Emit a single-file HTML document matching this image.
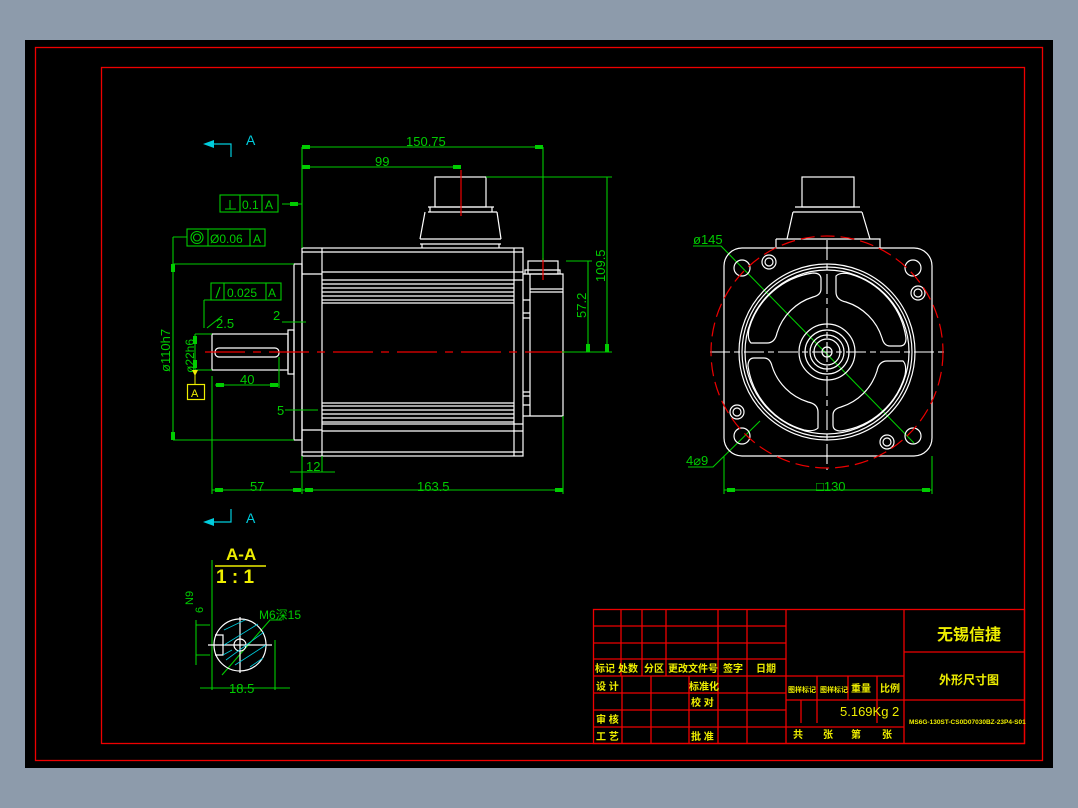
<!DOCTYPE html>
<html><head><meta charset="utf-8"><style>
html,body{margin:0;padding:0;background:#8d9bab;width:1078px;height:808px;overflow:hidden}
svg{display:block}
text{font-family:"Liberation Sans","Noto Sans CJK SC",sans-serif}
</style></head><body>
<svg width="1078" height="808" viewBox="0 0 1078 808" xmlns="http://www.w3.org/2000/svg">
<rect x="25" y="40" width="1028" height="728" fill="#000"/>
<g fill="none" stroke="#e00" stroke-width="1.3">
<rect x="35.5" y="47.5" width="1007" height="713"/>
<rect x="101.5" y="67.5" width="923" height="676"/>
</g>

<g fill="none" stroke="#fff" stroke-width="1.2">
 <rect x="435" y="177" width="51" height="30"/>
 <path d="M428 207 H494 M428 212 H497 M425 212 L420 239 M497 212 L501 239 M420 239 H501 M420 244 H501 M422 244 V248 M499 244 V248 M430 207 V212 M492 207 V212"/>
 <rect x="302" y="248" width="221" height="208"/>
 <path d="M322 248 V456 M514 248 V456 M302 274 H322 M302 430 H322 M322 272 H523 M322 284 H514 M322 288 H514 M322 292 H514 M322 296 H514 M322 300 H514 M322 303 H514 M322 403 H514 M322 406 H514 M322 410 H514 M322 414 H514 M322 418 H514 M322 422 H514 M322 431 H523 M302 252 H523 M302 452 H523 M322 280 H523 M322 424 H523"/>
 <path d="M523 274 H563 V416 H523 M530 274 V416 M530 289 H563 M530 292 H563 M523 300 H530 M523 313 H530 M523 318 H530 M523 392 H530 M523 396 H530 M523 405 H530"/>
 <rect x="528" y="261" width="30" height="13"/>
 <path d="M525 274 V270 H560 V274"/>
 <rect x="294" y="264" width="8" height="176"/>
 <rect x="288" y="330" width="6" height="44"/>
 <rect x="212" y="334" width="76" height="36"/>
 <rect x="215" y="348" width="64" height="9" rx="4"/>
</g>
<path d="M205 352 H570" stroke="#e00" stroke-width="1.3" stroke-dasharray="40 8 8 8"/>
<path d="M461 170 V216 M543 258 V280" stroke="#e00" stroke-width="1.2"/>

<g stroke="#0c0" stroke-width="1.1" fill="none">
 <path d="M302 147 H543 M543 147 V260 M302 167 H461 M302 147 V248"/>
 <path d="M486 177 H612 M607 177 V352 M566 261 H592 M588 261 V352 M562 352 H612"/>
 <path d="M173 264 H294 M173 440 H294 M173 264 V440 M173 237 V264 M173 237 H187"/>
 <path d="M212 376 V494 M302 456 V494 M563 416 V494 M212 490 H563"/>
 <path d="M290 472 H335 M322 456 V472"/>
 <path d="M215 385 H279 M279 357 V388"/>
 <path d="M195 334 H212 M195 370 H212 M195 334 V370"/>
 <path d="M204 300 V328 M204 300 H213 M207 328 L222 316"/>
 <path d="M282 322 H306 M285 410 H318"/>
 <path d="M282 204 H302"/>
 <path d="M212 560 V690 M275 640 V690 M200 688 H290 M196 620 V665 M196 625 H210 M196 655 H210 M222 675 L270 620 H282"/>
 <path d="M724 456 V494 M932 456 V494 M724 490 H932"/>
 <path d="M693 246 H721 L914 443 M688 467 H713 L760 421"/>
</g>
<g fill="#0c0">
 <rect x="302" y="145" width="8" height="4"/><rect x="535" y="145" width="8" height="4"/>
 <rect x="302" y="165" width="8" height="4"/><rect x="453" y="165" width="8" height="4"/>
 <rect x="605" y="344" width="4" height="8"/><rect x="586" y="344" width="4" height="8"/>
 <rect x="171" y="264" width="4" height="8"/><rect x="171" y="432" width="4" height="8"/>
 <rect x="215" y="488" width="8" height="4"/><rect x="293" y="488" width="8" height="4"/>
 <rect x="305" y="488" width="8" height="4"/><rect x="555" y="488" width="8" height="4"/>
 <rect x="216" y="383" width="8" height="4"/><rect x="270" y="383" width="8" height="4"/>
 <rect x="727" y="488" width="8" height="4"/><rect x="922" y="488" width="8" height="4"/>
 <rect x="193" y="336" width="4" height="8"/><rect x="193" y="360" width="4" height="8"/>
 <rect x="290" y="202" width="8" height="4"/>
</g>
<g fill="#0c0" font-size="13">
 <text x="406" y="146">150.75</text>
 <text x="375" y="166">99</text>
 <text x="240" y="384">40</text>
 <text x="250" y="491">57</text>
 <text x="417" y="491">163.5</text>
 <text x="306" y="471">12</text>
 <text x="273" y="320">2</text>
 <text x="277" y="415">5</text>
 <text x="216" y="328">2.5</text>
 <text x="816" y="491">□130</text>
 <text x="693" y="244">ø145</text>
 <text x="686" y="465">4⌀9</text>
 <text x="229" y="693">18.5</text>
 <text x="259" y="619" font-size="12">M6深15</text>
 <text transform="translate(605 282) rotate(-90)">109.5</text>
 <text transform="translate(586 318) rotate(-90)">57.2</text>
 <text transform="translate(170 372) rotate(-90)">ø110h7</text>
 <text transform="translate(194 373) rotate(-90)" font-size="12">ø22h6</text>
 <text transform="translate(193 605) rotate(-90)" font-size="11">N9</text>
 <text transform="translate(203 613) rotate(-90)" font-size="11">6</text>
</g>
<g stroke="#0c0" stroke-width="1.1" fill="none">
 <rect x="220" y="195" width="58" height="17"/><path d="M240 195 V212 M262 195 V212 M225 209 H236 M230 200 V209"/>
 <rect x="187" y="229" width="78" height="17"/><path d="M208 229 V246 M250 229 V246"/><circle cx="197" cy="237.5" r="6"/><circle cx="197" cy="237.5" r="3.5"/>
 <rect x="211" y="283" width="70" height="17"/><path d="M224 283 V300 M266 283 V300 M216 298 L220 287"/>
</g>
<g fill="#0c0" font-size="12">
 <text x="242" y="209">0.1</text><text x="265" y="209">A</text>
 <text x="210" y="243">Ø0.06</text><text x="253" y="243">A</text>
 <text x="227" y="297">0.025</text><text x="268" y="297">A</text>
</g>
<path d="M195 370 V385" stroke="#ee0" stroke-width="1"/>
<path d="M192 370 H198 L195 376Z" fill="#ee0"/>
<rect x="187.5" y="384.5" width="17" height="15" fill="none" stroke="#ee0" stroke-width="1.2"/>
<text x="191" y="397" fill="#ee0" font-size="11">A</text>

<g stroke="#0cd" stroke-width="1.2" fill="none"><path d="M210 144 H231 V157"/><path d="M210 522 H231 V509"/></g>
<path d="M203 144 L214 140 V148Z M203 522 L214 518 V526Z" fill="#0cd"/>
<text x="246" y="145" fill="#0cd" font-size="14">A</text>
<text x="246" y="523" fill="#0cd" font-size="14">A</text>

<g fill="#ee0" font-weight="bold">
 <text x="226" y="560" font-size="17" font-family="Liberation Mono,monospace">A-A</text>
 <text x="216" y="583" font-size="19" font-family="Liberation Mono,monospace">1 : 1</text>
</g>
<path d="M215 566 H266" stroke="#ee0" stroke-width="1.5"/>
<g stroke="#fff" stroke-width="1.2" fill="none">
 <circle cx="240" cy="645" r="26"/><circle cx="240" cy="645" r="6"/>
 <path d="M215 635 H223 V655 H215"/>
 <path d="M208 645 H272 M240 617 V673"/>
</g>
<g stroke="#0cd" stroke-width="0.8"><path d="M224 630 L245 620 M224 645 L258 624 M226 660 L264 632 M235 665 L266 645 M250 667 L263 658 M223 655 L232 650"/></g>

<g fill="none" stroke="#fff" stroke-width="1.2">
 <rect x="802" y="177" width="52" height="30"/>
 <path d="M795 207 H860 M793 212 H862 M793 212 L787 239 M862 212 L870 239 M776 239 H880 V248 M776 239 V248"/>
 <rect x="724" y="248" width="208" height="208" rx="18"/>
 <circle cx="827" cy="352" r="88"/><circle cx="827" cy="352" r="85"/><circle cx="827" cy="352" r="82"/>
 <circle cx="827" cy="352" r="28"/><circle cx="827" cy="352" r="22"/><circle cx="827" cy="352" r="17"/><circle cx="827" cy="352" r="13"/><circle cx="827" cy="352" r="5"/>
 <g id="sl"><path d="M836 276 Q840 272 850 274 A78 78 0 0 1 906 338 Q906 346 900 346 H890 Q884 346 882 338 A55 55 0 0 0 846 302 Q836 300 836 292 Z"/></g>
 <use href="#sl" transform="rotate(90 827 352)"/><use href="#sl" transform="rotate(180 827 352)"/><use href="#sl" transform="rotate(270 827 352)"/>
 <circle cx="742" cy="268" r="8"/><circle cx="913" cy="268" r="8"/><circle cx="742" cy="436" r="8"/><circle cx="913" cy="436" r="8"/>
 <circle cx="769" cy="262" r="7"/><circle cx="769" cy="262" r="4"/>
 <circle cx="918" cy="293" r="7"/><circle cx="918" cy="293" r="4"/>
 <circle cx="737" cy="412" r="7"/><circle cx="737" cy="412" r="4"/>
 <circle cx="887" cy="442" r="7"/><circle cx="887" cy="442" r="4"/>
</g>
<path d="M710 352 H948 M827 240 V470" stroke="#fff" stroke-width="1.1" stroke-dasharray="20 4 6 4"/>
<circle cx="827" cy="352" r="116" fill="none" stroke="#e00" stroke-width="1.2" stroke-dasharray="14 6"/>

<g stroke="#e00" stroke-width="1.3" fill="none">
 <rect x="593.5" y="609.5" width="431" height="134"/>
 <path d="M593 626 H786 M593 643 H786 M593 659 H786 M593 676 H904 M593 693 H786 M593 710 H786 M593 727 H904"/>
 <path d="M621 609 V676 M642 609 V676 M666 609 V676 M718 609 V743 M747 609 V743 M786 609 V743 M904 609 V743"/>
 <path d="M622 676 V743 M651 676 V743 M689 676 V743"/>
 <path d="M786 700 H904 M817 676 V723 M848 676 V700 M877 676 V723 M801 700 V723"/>
 <path d="M904 652 H1024 M904 700 H1024"/>
</g>
<g fill="#ee0" font-family="Noto Sans CJK SC,sans-serif" font-weight="bold" font-size="10">
 <text x="595" y="672">标记</text><text x="618" y="672">处数</text><text x="644" y="672">分区</text><text x="668" y="672">更改文件号</text><text x="723" y="672">签字</text><text x="756" y="672">日期</text>
 <text x="596" y="690">设 计</text><text x="689" y="690">标准化</text><text x="691" y="706">校 对</text>
 <text x="596" y="723">审 核</text><text x="596" y="740">工 艺</text><text x="691" y="740">批 准</text>
 <text x="788" y="692" font-size="7">图样标记</text><text x="820" y="692" font-size="7">图样标记</text><text x="851" y="692">重量</text><text x="880" y="692">比例</text>
 <text x="793" y="738">共</text><text x="823" y="738">张</text><text x="851" y="738">第</text><text x="882" y="738">张</text>
 <text x="937" y="640" font-size="16">无锡信捷</text>
 <text x="939" y="684" font-size="12">外形尺寸图</text>
</g>
<text x="840" y="716" fill="#ee0" font-size="13">5.169Kg 2</text>
<text x="909" y="724" fill="#ee0" font-size="6.5" font-weight="bold">MS6G-130ST-CS0D07030BZ-23P4-S01</text>
</svg>
</body></html>
